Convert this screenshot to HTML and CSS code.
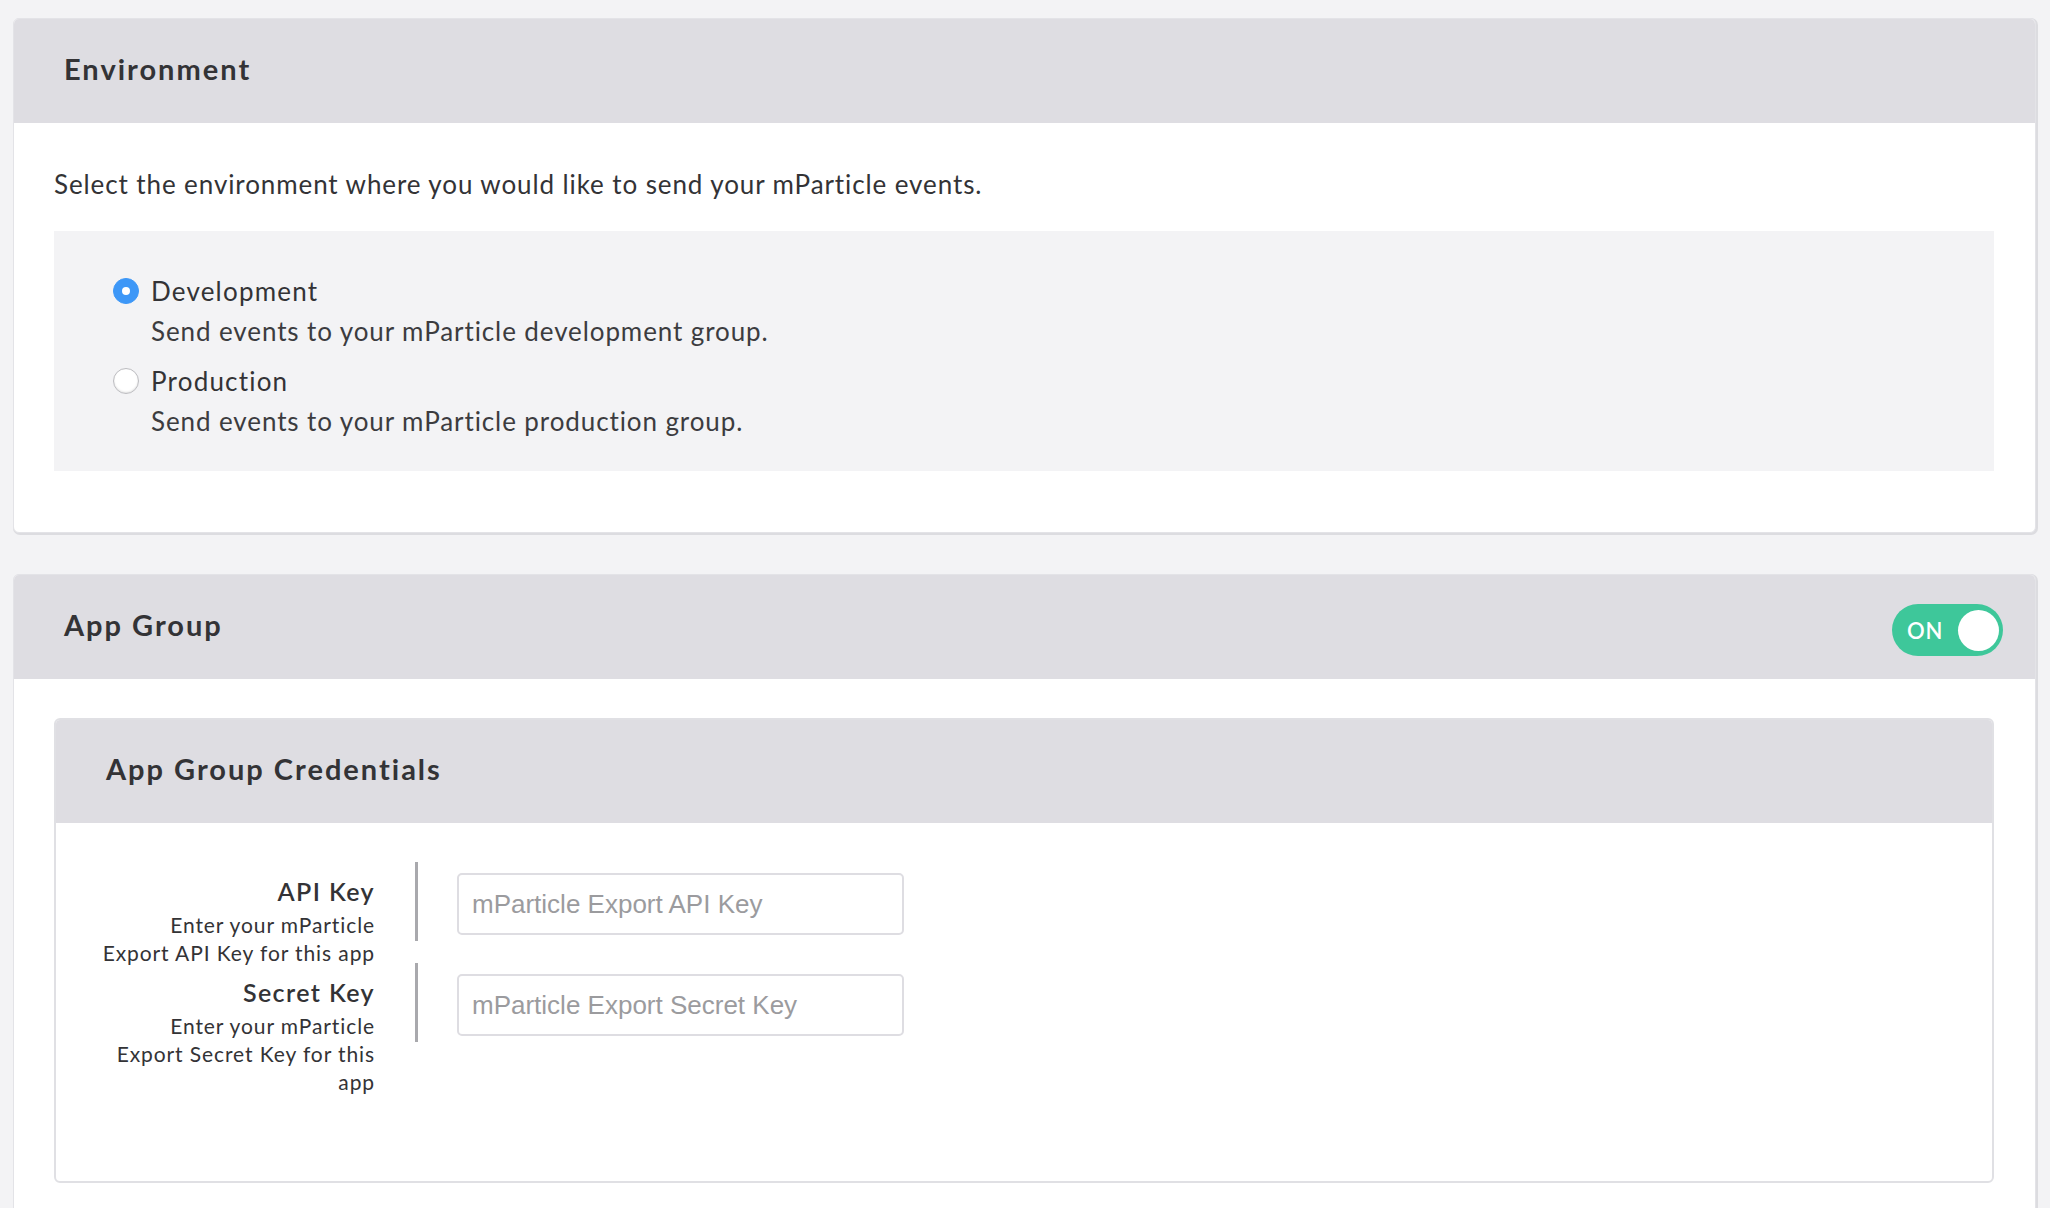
FILE: index.html
```html
<!DOCTYPE html>
<html lang="en">
<head>
<meta charset="utf-8">
<title>Environment &amp; App Group</title>
<link rel="stylesheet" href="styles.css">
</head>
<body>
<div class="page">
  <section class="card">
    <header class="card-header">
      <h2 class="card-title">Environment</h2>
    </header>
    <div class="card-body env-body">
      <p class="intro">Select the environment where you would like to send your mParticle events.</p>
      <div class="choice-box">
        <div class="choice">
          <div class="choice-line">
            <span class="radio radio-on"></span>
            <span class="choice-label">Development</span>
          </div>
          <div class="choice-desc">Send events to your mParticle development group.</div>
        </div>
        <div class="choice">
          <div class="choice-line">
            <span class="radio"></span>
            <span class="choice-label">Production</span>
          </div>
          <div class="choice-desc">Send events to your mParticle production group.</div>
        </div>
      </div>
    </div>
  </section>

  <section class="card card-open">
    <header class="card-header">
      <h2 class="card-title">App Group</h2>
      <div class="toggle"><span class="toggle-text">ON</span><span class="toggle-knob"></span></div>
    </header>
    <div class="card-body group-body">
      <section class="inner-card">
        <header class="inner-header">
          <h3 class="card-title">App Group Credentials</h3>
        </header>
        <div class="inner-body">
          <div class="form-row">
            <div class="field-label">
              <div class="label-title">API Key</div>
              <div class="label-desc">Enter your mParticle Export API Key for this app</div>
            </div>
            <div class="field-control">
              <input class="text-input" type="text" placeholder="mParticle Export API Key">
            </div>
          </div>
          <div class="form-row">
            <div class="field-label">
              <div class="label-title">Secret Key</div>
              <div class="label-desc">Enter your mParticle Export Secret Key for this app</div>
            </div>
            <div class="field-control">
              <input class="text-input" type="text" placeholder="mParticle Export Secret Key">
            </div>
          </div>
        </div>
      </section>
    </div>
  </section>
</div>
</body>
</html>
```

FILE: styles.css
```css
* { box-sizing: border-box; }

html, body {
  margin: 0;
  padding: 0;
  background: #f3f3f5;
  font-family: "Lato", "Noto Sans", sans-serif;
  color: #333336;
}

.page {
  padding: 18px 14px 0 13px;
}

.card {
  background: #ffffff;
  border: 1px solid #e3e3e7;
  border-radius: 6px;
  box-shadow: 1px 1px 0 1px #dcdce0;
  overflow: hidden;
  margin-bottom: 41px;
}

.card-header {
  height: 104px;
  background: #dedde2;
  display: flex;
  align-items: center;
  justify-content: space-between;
  padding: 0 32px 6px 50px;
}

.card-title {
  margin: 0;
  font-size: 29px;
  font-weight: 700;
  color: #333336;
  letter-spacing: 2px;
}

.env-body {
  padding: 0 41px 61px 40px;
}

.intro {
  margin: 0;
  padding-top: 43px;
  font-size: 26px;
  line-height: 36px;
  letter-spacing: 0.9px;
  color: #333336;
}

.choice-box {
  margin-top: 29px;
  background: #f3f3f5;
  padding: 42px 40px 32px 59px;
}

.choice + .choice {
  margin-top: 14px;
}

.choice-line {
  display: flex;
  align-items: center;
  height: 36px;
}

.radio {
  width: 26px;
  height: 26px;
  border-radius: 50%;
  background: #ffffff;
  border: 1px solid #bcbcc0;
  box-shadow: inset 0 -1px 2px rgba(0,0,0,0.12);
  margin-right: 12px;
  flex: none;
  display: flex;
  align-items: center;
  justify-content: center;
}

.radio-on {
  background: #3d97f7;
  border-color: #3d97f7;
  box-shadow: none;
}

.radio-on::after {
  content: "";
  width: 8px;
  height: 8px;
  border-radius: 50%;
  background: #ffffff;
}

.choice-label {
  font-size: 26px;
  line-height: 36px;
  letter-spacing: 1.2px;
}

.choice-desc {
  margin-top: 4px;
  padding-left: 38px;
  font-size: 26px;
  line-height: 36px;
  letter-spacing: 0.9px;
  color: #3c3c3f;
}

.card-open {
  margin-bottom: 0;
  border-bottom: none;
  border-radius: 6px 6px 0 0;
}

.toggle {
  margin-top: 12px;
  width: 111px;
  height: 52px;
  border-radius: 26px;
  background: #3ec79a;
  display: flex;
  align-items: center;
  justify-content: space-between;
  padding: 0 4px 0 15px;
}

.toggle-text {
  color: #ffffff;
  font-size: 22px;
  font-weight: 600;
  letter-spacing: 0.8px;
}

.toggle-knob {
  width: 41px;
  height: 41px;
  border-radius: 50%;
  background: #ffffff;
}

.group-body {
  padding: 39px 41px 40px 40px;
}

.inner-card {
  border: 2px solid #e0e0e4;
  border-radius: 6px;
  overflow: hidden;
}

.inner-header {
  height: 103px;
  background: #dedde2;
  display: flex;
  align-items: center;
  padding: 0 0 6px 50px;
}

.inner-body {
  padding: 39px 40px 117px 42px;
}

.form-row {
  display: flex;
  height: 79px;
  margin-bottom: 22px;
}

.field-label {
  width: 277px;
  margin-right: 40px;
  text-align: right;
  padding-top: 13px;
}

.label-title {
  font-size: 25px;
  line-height: 32px;
  font-weight: 600;
  letter-spacing: 1.4px;
  color: #333336;
}

.label-desc {
  margin-top: 4px;
  font-size: 21px;
  line-height: 28px;
  letter-spacing: 0.9px;
  color: #333336;
}

.field-control {
  border-left: 3px solid #a9a9ad;
  padding: 11px 0 0 39px;
  height: 79px;
}

.text-input {
  width: 447px;
  height: 62px;
  border: 2px solid #dedde2;
  border-radius: 5px;
  padding: 0 13px;
  font-family: "Liberation Sans", Arial, sans-serif;
  font-size: 26px;
  color: #333;
  background: #fff;
  outline: none;
}

.text-input::placeholder {
  color: #9b9b9e;
}
```
